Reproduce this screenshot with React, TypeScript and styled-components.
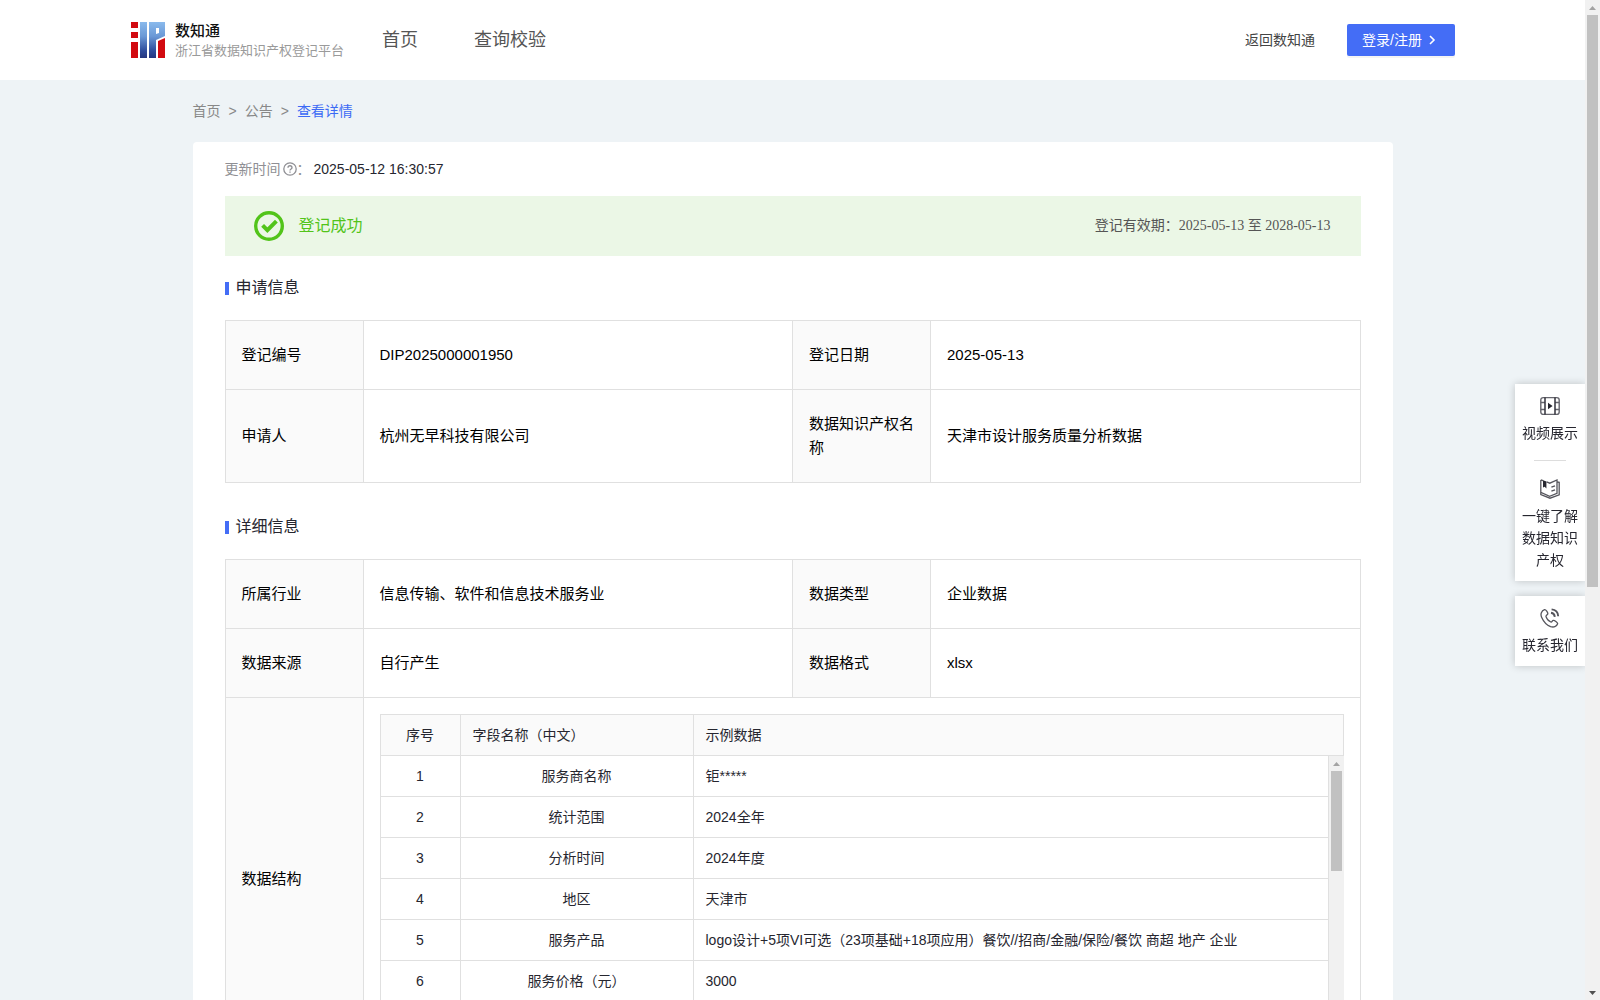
import React from 'react';
import styled, { createGlobalStyle } from 'styled-components';

const sans = '"Liberation Sans", Arial, "Noto Sans CJK SC", sans-serif';
const serif = '"Liberation Serif", "Times New Roman", "Noto Sans CJK SC", serif';
const line = '#e0e0e0';
const brand = '#446df6';

const GlobalStyle = createGlobalStyle`
  * { box-sizing: border-box; }
  body { margin: 0; background: #eef3f6; font-family: ${sans}; font-size: 14px; line-height: 22px; color: #26262f; }
  h2, p { margin: 0; font-weight: 400; }
  a { color: inherit; text-decoration: none; }
  table { border-collapse: collapse; border-spacing: 0; table-layout: fixed; width: 100%; }
`;

const Shell = styled.div`
  display: flex;
  height: 100vh;
`;

const Page = styled.div`
  flex: 1;
  min-width: 0;
  overflow-y: auto;
  scrollbar-width: none;
`;

const Track = styled.div`
  display: flex;
  flex-direction: column;
  align-items: center;
  flex: none;
  width: 15px;
  background: #f1f1f1;
`;

const Rail = styled.div`
  flex: 1;
  width: 11px;
`;

const Thumb = styled.div<{ $size: number }>`
  height: ${(p) => p.$size}%;
  background: #c1c1c1;
`;

const ArrowBox = styled.span`
  display: flex;
  align-items: center;
  justify-content: center;
  width: 15px;
  height: 15px;
`;

const Header = styled.header`
  display: flex;
  align-items: center;
  height: 80px;
  padding: 0 130px 0 131px;
  background: #fff;
`;

const Brand = styled.a`
  display: flex;
  align-items: center;
  gap: 10px;
  margin-right: 38px;
`;

const BrandText = styled.span`
  display: flex;
  flex-direction: column;
  padding-top: 1px;
`;

const BrandName = styled.strong`
  font-size: 15px;
  font-weight: 500;
  line-height: 20px;
  color: #111;
`;

const BrandSub = styled.span`
  font-size: 13px;
  line-height: 20px;
  color: #9a9a9a;
`;

const Nav = styled.nav`
  display: flex;
  flex: 1;
  gap: 56px;
  font-size: 18px;
  color: #555;
`;

const BackLink = styled.a`
  margin-right: 32px;
  color: #444;
`;

const LoginButton = styled.button`
  display: flex;
  align-items: center;
  gap: 5px;
  width: 108px;
  height: 32px;
  padding: 0 15px;
  border: 0;
  border-radius: 2px;
  background: ${brand};
  box-shadow: 0 2px 0 rgba(0, 0, 0, 0.045);
  color: #fff;
  font: 14px/22px ${sans};
`;

const Content = styled.div`
  max-width: 1200px;
  margin: 0 auto;
`;

const Breadcrumb = styled.nav`
  display: flex;
  gap: 8px;
  padding: 20px 0;
  color: #888;
`;

const Current = styled.a`
  color: #3c6af5;
`;

const Card = styled.main`
  padding: 16px 32px 32px;
  border-radius: 4px;
  background: #fff;
`;

const Updated = styled.p`
  display: flex;
  align-items: center;
  color: #8f8f94;
  svg { margin-left: 2px; }
`;

const UpdatedValue = styled.time`
  margin-left: 3px;
  color: #26262f;
`;

const Banner = styled.section`
  display: flex;
  align-items: center;
  height: 60px;
  margin-top: 16px;
  padding: 0 30px 0 29px;
  background: #ebf7e6;
`;

const BannerText = styled.span`
  flex: 1;
  margin-left: 15px;
  font-size: 16px;
  color: #52c41a;
`;

const Validity = styled.span`
  font-family: ${serif};
  color: #555;
`;

const SectionTitle = styled.h2<{ $top: number }>`
  display: flex;
  align-items: center;
  gap: 7px;
  margin: ${(p) => p.$top}px 0 20px;
  font-size: 16px;
  line-height: 24px;
  &::before {
    content: '';
    width: 4px;
    height: 13px;
    background: ${brand};
  }
`;

const InfoTable = styled.table`
  font-size: 15px;
  line-height: 24px;
  color: #000;
`;

const Label = styled.th`
  padding: 22px 16px;
  border: 1px solid ${line};
  background: #fafafa;
  font-weight: 400;
  text-align: left;
`;

const Value = styled.td<{ $nested?: boolean }>`
  padding: ${(p) => (p.$nested ? 16 : 22)}px 16px;
  border: 1px solid ${line};
`;

const FieldTable = styled.table`
  font-size: 14px;
  line-height: 22px;
  color: #26262f;
`;

const FieldHead = styled.th<{ $center?: boolean }>`
  height: 41px;
  padding: 0 12px;
  border: 1px solid ${line};
  background: #fafafa;
  font-weight: 400;
  text-align: ${(p) => (p.$center ? 'center' : 'left')};
`;

const FieldCell = styled.td<{ $center?: boolean }>`
  height: 41px;
  padding: 0 12px;
  border: 1px solid ${line};
  text-align: ${(p) => (p.$center ? 'center' : 'left')};
`;

const FieldArea = styled.div`
  display: flex;
  height: 287px;
`;

const FieldScroll = styled.div`
  flex: 1;
  min-width: 0;
  overflow-y: auto;
  scrollbar-width: none;
  ${FieldTable} { margin-top: -1px; }
`;

const SideBar = styled.aside`
  position: fixed;
  right: 15px;
  top: 384px;
  display: flex;
  flex-direction: column;
  gap: 15px;
  width: 70px;
  clip-path: inset(-10px 0 -10px -10px);
`;

const SidePanel = styled.div`
  display: flex;
  flex-direction: column;
  align-items: center;
  padding: 12px 7px 10px;
  background: #fff;
  box-shadow: 0 0 8px rgba(0, 0, 0, 0.2);
`;

const SideButton = styled.button`
  display: flex;
  flex-direction: column;
  align-items: center;
  gap: 6px;
  width: 56px;
  padding: 0;
  border: 0;
  background: none;
  color: #26262f;
  font: 14px/22px ${sans};
`;

const Divider = styled.span`
  width: 32px;
  height: 1px;
  margin: 16px 0 18px;
  background: #ddd;
`;

const Arrow = ({ down = false, active = false }) => (
  <ArrowBox>
    <svg width="7" height="4" viewBox="0 0 7 4" fill={active ? '#505050' : '#a3a3a3'} aria-hidden="true">
      <path d={down ? 'M0 0h7L3.5 4z' : 'M0 4h7L3.5 0z'} />
    </svg>
  </ArrowBox>
);

const ScrollTrack = ({ size }: { size: number }) => (
  <Track aria-hidden="true">
    <Arrow />
    <Rail>
      <Thumb $size={size} />
    </Rail>
    <Arrow down active />
  </Track>
);

const Logo = () => (
  <svg width="34" height="36" viewBox="0 0 34 36" aria-hidden="true">
    <defs>
      <linearGradient id="blue" gradientUnits="userSpaceOnUse" x1="0" y1="0" x2="0" y2="36">
        <stop offset="0" stopColor="#8abaec" />
        <stop offset="0.4" stopColor="#6a98d6" />
        <stop offset="0.8" stopColor="#2e4c9c" />
        <stop offset="1" stopColor="#25367f" />
      </linearGradient>
    </defs>
    <path fill="#d20a10" d="M0 0h7v6H0zM0 10h7v6H0zM0 20h7v16H0zM27 19l7-3v20h-7z" />
    <path fill="url(#blue)" fillRule="evenodd" d="M9 0h7v36H9zM18 0h16v14l-9 4v18h-7zM25 6v6l3-1V6z" />
  </svg>
);

const Chevron = () => (
  <svg width="10" height="10" viewBox="0 0 10 10" fill="none" stroke="#fff" strokeWidth="1.6" aria-hidden="true">
    <path d="M3 1l4 4-4 4" />
  </svg>
);

const Question = () => (
  <svg width="14" height="14" viewBox="0 0 14 14" fill="none" stroke="#8f8f94" strokeWidth="1.3" aria-hidden="true">
    <circle cx="7" cy="7" r="6.2" />
    <path d="M5 5.7c0-2.6 4-2.6 4 0C9 7 7 7 7 8.6M7 9.6v1.2" />
  </svg>
);

const Check = () => (
  <svg width="30" height="30" viewBox="0 0 30 30" fill="none" stroke="#52c41a" strokeWidth="3.4" aria-hidden="true">
    <circle cx="15" cy="15" r="13.3" />
    <path d="M8.6 14.4l4.8 4.8 9-9" strokeWidth="4" />
  </svg>
);

const Film = () => (
  <svg width="20" height="20" viewBox="0 0 20 20" fill="none" stroke="#66666e" strokeWidth="1.4" aria-hidden="true">
    <rect x="0.8" y="1.6" width="18.4" height="16.8" rx="2.4" />
    <path d="M.8 6.500h4M.8 13.500h4M15.200 6.500h4M15.200 13.500h4" />
    <path d="M5 1.600v16.800M15 1.600v16.800" stroke="#26262f" />
    <path d="M8 6.800l4.600 3.200L8 13.200z" fill="#26262f" stroke="none" />
  </svg>
);

const Book = () => (
  <svg width="20" height="20" viewBox="0 0 20 20" fill="none" stroke="#55555c" strokeWidth="1.3" aria-hidden="true">
    <path d="M.8 1v12.400l8.800 4 7.400-3V1L9.800 4.200 6.600 2.800M.8 1l2.400.6" />
    <path d="M17 3l2.200.4v12.400L10 19.200.8 15.600v-2.200M11.400 8.200l3.600-1.400M11.400 12.200l3.600-1.400" />
    <path d="M3 1.200l3.400 1.200v7L4.700 7.800 3 8.400z" fill="#26262f" stroke="none" />
  </svg>
);

const Phone = () => (
  <svg width="20" height="20" viewBox="0 0 20 20" fill="none" stroke="#55555c" strokeWidth="1.3" aria-hidden="true">
    <path d="M4.600 1.600C1.400 2.800.2 6 1.600 9.200c2 4.600 5 7.800 9 9.400 3 1 6 .2 7-2.800.4-1.200-3.400-4-4.600-3.400-1 .4-1 2-2.200 1.600C8.600 13 6.600 10.600 6 8.600c-.4-1.200 1.600-1.600 1.800-2.800C8 4.600 5.800 1.200 4.600 1.600z" />
    <path d="M11 4.800c2.200.4 3.600 1.800 3.800 4M11.600 1.400c3.800.4 6.400 3 6.600 6.800" strokeWidth="1.900" />
  </svg>
);

const fields = [
  ['服务商名称', '钜*****'],
  ['统计范围', '2024全年'],
  ['分析时间', '2024年度'],
  ['地区', '天津市'],
  ['服务产品', 'logo设计+5项VI可选（23项基础+18项应用）餐饮//招商/金融/保险/餐饮 商超 地产 企业'],
  ['服务价格（元）', '3000'],
];

const InfoCols = () => (
  <colgroup>
    <col style={{ width: 138 }} />
    <col />
    <col style={{ width: 138 }} />
    <col />
  </colgroup>
);

const FieldCols = () => (
  <colgroup>
    <col style={{ width: 80 }} />
    <col style={{ width: 233 }} />
    <col />
  </colgroup>
);

export default function App() {
  return (
    <Shell>
      <GlobalStyle />
      <Page>
        <Header>
          <Brand href="#">
            <Logo />
            <BrandText>
              <BrandName>数知通</BrandName>
              <BrandSub>浙江省数据知识产权登记平台</BrandSub>
            </BrandText>
          </Brand>
          <Nav>
            <a href="#">首页</a>
            <a href="#">查询校验</a>
          </Nav>
          <BackLink href="#">返回数知通</BackLink>
          <LoginButton>
            登录/注册
            <Chevron />
          </LoginButton>
        </Header>
        <Content>
          <Breadcrumb>
            <a href="#">首页</a>
            <span>&gt;</span>
            <a href="#">公告</a>
            <span>&gt;</span>
            <Current href="#">查看详情</Current>
          </Breadcrumb>
          <Card>
            <Updated>
              更新时间
              <Question />：<UpdatedValue>2025-05-12 16:30:57</UpdatedValue>
            </Updated>
            <Banner>
              <Check />
              <BannerText>登记成功</BannerText>
              <Validity>登记有效期：2025-05-13 至 2028-05-13</Validity>
            </Banner>
            <SectionTitle $top={20}>申请信息</SectionTitle>
            <InfoTable>
              <InfoCols />
              <tbody>
                <tr>
                  <Label>登记编号</Label>
                  <Value>DIP2025000001950</Value>
                  <Label>登记日期</Label>
                  <Value>2025-05-13</Value>
                </tr>
                <tr>
                  <Label>申请人</Label>
                  <Value>杭州无早科技有限公司</Value>
                  <Label>数据知识产权名称</Label>
                  <Value>天津市设计服务质量分析数据</Value>
                </tr>
              </tbody>
            </InfoTable>
            <SectionTitle $top={32}>详细信息</SectionTitle>
            <InfoTable>
              <InfoCols />
              <tbody>
                <tr>
                  <Label>所属行业</Label>
                  <Value>信息传输、软件和信息技术服务业</Value>
                  <Label>数据类型</Label>
                  <Value>企业数据</Value>
                </tr>
                <tr>
                  <Label>数据来源</Label>
                  <Value>自行产生</Value>
                  <Label>数据格式</Label>
                  <Value>xlsx</Value>
                </tr>
                <tr>
                  <Label>数据结构</Label>
                  <Value colSpan={3} $nested>
                    <FieldTable>
                      <FieldCols />
                      <thead>
                        <tr>
                          <FieldHead $center>序号</FieldHead>
                          <FieldHead>字段名称（中文）</FieldHead>
                          <FieldHead>示例数据</FieldHead>
                        </tr>
                      </thead>
                    </FieldTable>
                    <FieldArea>
                      <FieldScroll>
                        <FieldTable>
                          <FieldCols />
                          <tbody>
                            {fields.map(([name, sample], i) => (
                              <tr key={name}>
                                <FieldCell $center>{i + 1}</FieldCell>
                                <FieldCell $center>{name}</FieldCell>
                                <FieldCell>{sample}</FieldCell>
                              </tr>
                            ))}
                          </tbody>
                        </FieldTable>
                      </FieldScroll>
                      <ScrollTrack size={39} />
                    </FieldArea>
                  </Value>
                </tr>
              </tbody>
            </InfoTable>
          </Card>
        </Content>
      </Page>
      <ScrollTrack size={59} />
      <SideBar>
        <SidePanel>
          <SideButton>
            <Film />
            视频展示
          </SideButton>
          <Divider />
          <SideButton>
            <Book />
            一键了解数据知识产权
          </SideButton>
        </SidePanel>
        <SidePanel>
          <SideButton>
            <Phone />
            联系我们
          </SideButton>
        </SidePanel>
      </SideBar>
    </Shell>
  );
}
